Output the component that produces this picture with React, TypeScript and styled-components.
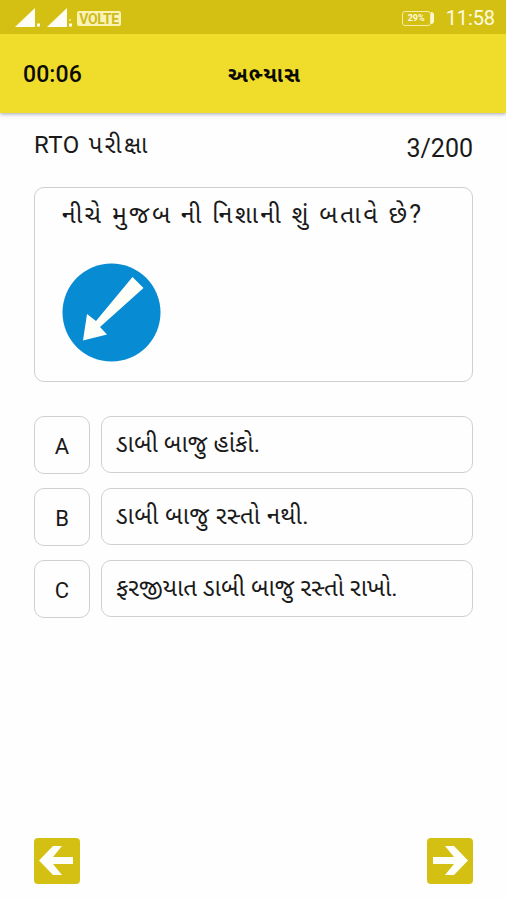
import React from "react";
import styled, { createGlobalStyle } from "styled-components";

const GlobalStyle = createGlobalStyle`
  * { box-sizing: border-box; }
  body { margin: 0; background: #fefefe; }
`;

const Screen = styled.div`
  width: 506px;
  height: 900px;
  display: flex;
  flex-direction: column;
  overflow: hidden;
  background: #fefefe;
  color: #1a1a1a;
  font-family: Roboto, "Noto Sans Gujarati", "Noto Sans", sans-serif;
`;

const StatusBar = styled.div`
  position: relative;
  z-index: 1;
  height: 34px;
  flex: none;
  display: flex;
  align-items: center;
  justify-content: space-between;
  padding: 2px 11px 0 15px;
  background: #d3c012;
  color: #fffbe0;
`;

const StatusGroup = styled.div<{ $gap: number }>`
  display: flex;
  align-items: center;
  gap: ${(p) => p.$gap}px;
`;

const SignalGroup = styled.div`
  display: flex;
  gap: 5px;
`;

const NetworkBadge = styled.span`
  width: 44px;
  height: 15px;
  border-radius: 2px;
  background: #fbf3b4;
  color: #cdbb1c;
  font-size: 14px;
  font-weight: 700;
  line-height: 16px;
  text-align: center;
  letter-spacing: -0.4px;
`;

const Battery = styled.span`
  display: flex;
  align-items: center;
`;

const BatteryBody = styled.span`
  width: 29px;
  height: 15px;
  border: 1px solid #f5eda8;
  border-radius: 3px;
  font-size: 9px;
  font-weight: 700;
  line-height: 13px;
  text-align: center;
`;

const BatteryTip = styled.span`
  width: 3px;
  height: 12px;
  border-radius: 0 3px 3px 0;
  background: #fdf8d0;
`;

const Clock = styled.span`
  font-size: 20px;
  line-height: 22px;
  letter-spacing: -0.1px;
`;

const Header = styled.header`
  height: 79px;
  flex: none;
  display: grid;
  grid-template-columns: 1fr auto 1fr;
  align-items: center;
  padding: 2px 0 0 23px;
  background: #f0dd2b;
  box-shadow: 0 1px 4px rgba(70, 70, 110, 0.5);
  color: #0c0b02;
`;

const Timer = styled.span`
  font-size: 23px;
  font-weight: 500;
  letter-spacing: 0.1px;
`;

const Title = styled.h1`
  margin: 0;
  font-size: 21px;
  font-weight: 700;
  line-height: 28px;
  letter-spacing: 1.1px;
`;

const Content = styled.main`
  flex: 1;
  display: flex;
  flex-direction: column;
  padding: 17px 33px 16px 34px;
`;

const Summary = styled.div`
  height: 57px;
  flex: none;
  display: flex;
  justify-content: space-between;
`;

const ExamName = styled.span`
  font-size: 24px;
  line-height: 30px;
`;

const LatinPart = styled.span`
  margin-right: 3px;
  letter-spacing: 0.5px;
`;

const GujaratiPart = styled.span`
  letter-spacing: 2.2px;
`;

const Progress = styled.span`
  padding-top: 4px;
  font-size: 25px;
  line-height: 30px;
`;

const QuestionCard = styled.section`
  height: 195px;
  flex: none;
  display: flex;
  flex-direction: column;
  align-items: flex-start;
  padding: 11px 27px;
  border: 1px solid #cfcfcf;
  border-radius: 10px;
`;

const Question = styled.p`
  height: 64px;
  margin: 0;
  font-size: 25px;
  line-height: 32px;
  letter-spacing: 2.3px;
  white-space: nowrap;
`;

const Options = styled.div`
  display: flex;
  flex-direction: column;
  gap: 14px;
  margin-top: 34px;
`;

const Option = styled.div`
  height: 58px;
  display: grid;
  grid-template-columns: 56px 1fr;
  column-gap: 11px;
  align-items: start;
`;

const Letter = styled.span`
  height: 58px;
  border: 1px solid #d0d0d0;
  border-radius: 10px;
  font-size: 22px;
  line-height: 60px;
  text-align: center;
`;

const Answer = styled.span<{ $spacing: number }>`
  height: 57px;
  padding-left: 14px;
  border: 1px solid #d0d0d0;
  border-radius: 10px;
  font-size: 24px;
  line-height: 54px;
  letter-spacing: ${(p) => p.$spacing}px;
  white-space: nowrap;
`;

const Navigation = styled.nav`
  display: flex;
  justify-content: space-between;
  margin-top: auto;
`;

const NavButton = styled.button`
  width: 46px;
  height: 46px;
  padding: 0;
  border: 0;
  border-radius: 4px;
  background: #d3c012;

  svg { display: block; }
`;

const Signal = ({ dots }: { dots: number }) => (
  <svg width="27" height="20" viewBox="0 0 27 20" fill="#fffef4">
    <path d="M0 19 20 0v19Z" />
    <rect x="22" y="15.5" width="3" height="3" />
    {dots > 1 && <rect x="22" y="11" width="2" height="2" opacity="0.5" />}
  </svg>
);

const RoadSign = () => (
  <svg width="99" height="99" viewBox="0 0 99 99">
    <circle cx="49.5" cy="49.5" r="49" fill="#078bd3" />
    <path d="M70.5 14 81.5 25 38 64 45 71.5 21 77.5 25 51 34 58Z" fill="#fffffa" />
  </svg>
);

const Arrow = ({ right }: { right?: boolean }) => (
  <svg width="46" height="46" viewBox="0 0 46 46">
    <path
      d={right
        ? "M18 8h9l14 14.5L27 37h-9l9-11H6v-7h21Z"
        : "M28 8h-9L5 22.5 19 37h9l-9-11h20v-7H19Z"}
      fill="#fffffa"
    />
  </svg>
);

const options = [
  { letter: "A", text: "ડાબી બાજુ હાંકો.", spacing: 0 },
  { letter: "B", text: "ડાબી બાજુ રસ્તો નથી.", spacing: 0.4 },
  { letter: "C", text: "ફરજીયાત ડાબી બાજુ રસ્તો રાખો.", spacing: 0 },
];

export default function App() {
  return (
    <>
      <GlobalStyle />
      <Screen>
        <StatusBar>
          <StatusGroup $gap={3}>
            <SignalGroup>
              <Signal dots={1} />
              <Signal dots={2} />
            </SignalGroup>
            <NetworkBadge>VOLTE</NetworkBadge>
          </StatusGroup>
          <StatusGroup $gap={12}>
            <Battery>
              <BatteryBody>29%</BatteryBody>
              <BatteryTip />
            </Battery>
            <Clock>11:58</Clock>
          </StatusGroup>
        </StatusBar>
        <Header>
          <Timer>00:06</Timer>
          <Title>અભ્યાસ</Title>
        </Header>
        <Content>
          <Summary>
            <ExamName>
              <LatinPart>RTO</LatinPart> <GujaratiPart>પરીક્ષા</GujaratiPart>
            </ExamName>
            <Progress>3/200</Progress>
          </Summary>
          <QuestionCard>
            <Question>નીચે મુજબ ની નિશાની શું બતાવે છે?</Question>
            <RoadSign />
          </QuestionCard>
          <Options>
            {options.map((o) => (
              <Option key={o.letter}>
                <Letter>{o.letter}</Letter>
                <Answer $spacing={o.spacing}>{o.text}</Answer>
              </Option>
            ))}
          </Options>
          <Navigation>
            <NavButton aria-label="Previous"><Arrow /></NavButton>
            <NavButton aria-label="Next"><Arrow right /></NavButton>
          </Navigation>
        </Content>
      </Screen>
    </>
  );
}
